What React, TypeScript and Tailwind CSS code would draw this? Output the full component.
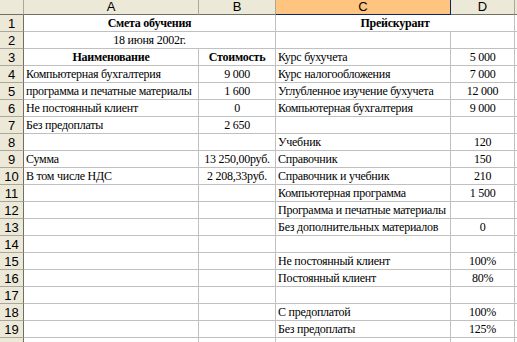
const serif = { fontFamily: '"Liberation Serif", "Times New Roman", serif' };

type Row = {
  a?: string;
  b?: string;
  c?: string;
  d?: string;
  boldAB?: boolean;
};

const rows: Row[] = [
  { a: "Наименование", b: "Стоимость", c: "Курс бухучета", d: "5 000", boldAB: true },
  { a: "Компьютерная бухгалтерия", b: "9 000", c: "Курс налогообложения", d: "7 000" },
  { a: "программа и печатные материалы", b: "1 600", c: "Углубленное изучение бухучета", d: "12 000" },
  { a: "Не постоянный клиент", b: "0", c: "Компьютерная бухгалтерия", d: "9 000" },
  { a: "Без предоплаты", b: "2 650" },
  { c: "Учебник", d: "120" },
  { a: "Сумма", b: "13 250,00руб.", c: "Справочник", d: "150" },
  { a: "В том числе НДС", b: "2 208,33руб.", c: "Справочник и учебник", d: "210" },
  { c: "Компьютерная программа", d: "1 500" },
  { c: "Программа и печатные материалы" },
  { c: "Без дополнительных материалов", d: "0" },
  {},
  { c: "Не постоянный клиент", d: "100%" },
  { c: "Постоянный клиент", d: "80%" },
  {},
  { c: "С предоплатой", d: "100%" },
  { c: "Без предоплаты", d: "125%" },
  {},
];

function RowHead({ n }: { n: number }) {
  return (
    <div className="w-[24px] shrink-0 h-full bg-[#ece9d8] border-r border-r-[#716f64] border-b border-b-[#aca899] text-center text-[13px] leading-[17px] tracking-normal text-black font-['Liberation_Sans',Arial,sans-serif]">
      {n}
    </div>
  );
}

export default function App() {
  return (
    <div className="w-[517px] h-[342px] overflow-hidden bg-white text-black select-none">
      {/* column headers */}
      <div className="flex h-[15px] font-['Liberation_Sans',Arial,sans-serif] text-[13px] leading-[14px] text-center">
        <div className="w-[24px] shrink-0 bg-[#ece9d8] border-r border-r-[#aca899] border-b border-b-[#716f64]" />
        <div className="w-[175px] shrink-0 bg-[#ece9d8] border-r border-r-[#aca899] border-b border-b-[#716f64]">A</div>
        <div className="w-[77px] shrink-0 bg-[#ece9d8] border-r border-r-[#aca899] border-b border-b-[#716f64]">B</div>
        <div className="w-[175px] shrink-0 bg-[#ffc47f] border-r border-r-[#0a246a] border-b border-b-[#0a246a]">C</div>
        <div className="w-[64px] shrink-0 bg-[#ece9d8] border-r border-r-[#aca899] border-b border-b-[#716f64]">D</div>
        <div className="flex-1 bg-[#ece9d8] border-b border-b-[#716f64]" />
      </div>

      <div style={serif} className="text-[12px] leading-[17px] tracking-[-0.25px]">
        {/* row 1 */}
        <div className="flex h-[17px]">
          <RowHead n={1} />
          <div className="w-[252px] shrink-0 border-r border-b border-[#c0c0c0] text-center font-bold">Смета обучения</div>
          <div className="w-[239px] shrink-0 border-r border-b border-[#c0c0c0] text-center font-bold">Прейскурант</div>
          <div className="flex-1 border-b border-[#c0c0c0]" />
        </div>
        {/* row 2 */}
        <div className="flex h-[17px]">
          <RowHead n={2} />
          <div className="w-[252px] shrink-0 border-r border-b border-[#c0c0c0] text-center">18 июня 2002г.</div>
          <div className="w-[175px] shrink-0 border-r border-b border-[#c0c0c0]" />
          <div className="w-[64px] shrink-0 border-r border-b border-[#c0c0c0]" />
          <div className="flex-1 border-b border-[#c0c0c0]" />
        </div>
        {rows.map((r, i) => (
          <div key={i} className="flex h-[17px]">
            <RowHead n={i + 3} />
            <div className={`w-[175px] shrink-0 border-r border-b border-[#c0c0c0] whitespace-nowrap px-[2px] ${r.boldAB ? "text-center font-bold" : "text-left"}`}>
              {r.a}
            </div>
            <div className={`w-[77px] shrink-0 border-r border-b border-[#c0c0c0] whitespace-nowrap text-center ${r.boldAB ? "font-bold" : ""}`}>
              {r.b}
            </div>
            <div className="w-[175px] shrink-0 border-r border-b border-[#c0c0c0] whitespace-nowrap px-[2px] text-left">{r.c}</div>
            <div className="w-[64px] shrink-0 border-r border-b border-[#c0c0c0] whitespace-nowrap text-center">{r.d}</div>
            <div className="flex-1 border-b border-[#c0c0c0]" />
          </div>
        ))}
      </div>
    </div>
  );
}
